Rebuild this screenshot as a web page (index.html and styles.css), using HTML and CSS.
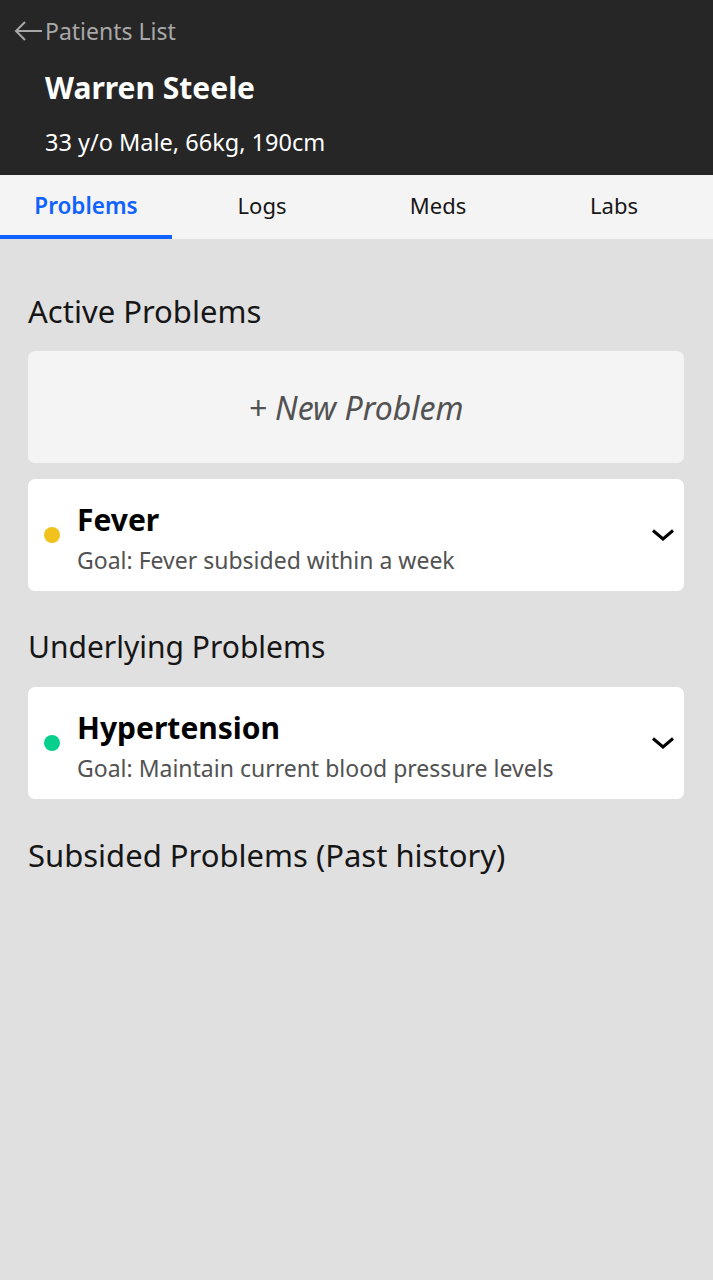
FILE: index.html
```html
<!DOCTYPE html>
<html>
<head>
<meta charset="utf-8">
<link rel="stylesheet" href="styles.css">
</head>
<body>
<header class="header">
  <a class="back">
    <svg class="back-icon" width="30" height="22" viewBox="0 0 30 22"><path d="M12 2 L3 11 L12 20 M3 11 H29" fill="none" stroke="#a8a8a8" stroke-width="2"/></svg>
    <span>Patients List</span>
  </a>
  <h1 class="name">Warren Steele</h1>
  <p class="info">33 y/o Male, 66kg, 190cm</p>
</header>
<nav class="tabs">
  <div class="tab active">Problems</div>
  <div class="tab">Logs</div>
  <div class="tab">Meds</div>
  <div class="tab">Labs</div>
</nav>
<main class="content">
  <h2 class="section">Active Problems</h2>
  <div class="card new">+ New Problem</div>
  <div class="card problem">
    <span class="dot yellow"></span>
    <div class="texts">
      <div class="title">Fever</div>
      <div class="goal">Goal: Fever subsided within a week</div>
    </div>
    <svg class="chev" width="22" height="14" viewBox="0 0 22 14"><path d="M1 2.5 L11 11 L21 2.5" fill="none" stroke="#000" stroke-width="3"/></svg>
  </div>
  <h2 class="section">Underlying Problems</h2>
  <div class="card problem">
    <span class="dot green"></span>
    <div class="texts">
      <div class="title">Hypertension</div>
      <div class="goal">Goal: Maintain current blood pressure levels</div>
    </div>
    <svg class="chev" width="22" height="14" viewBox="0 0 22 14"><path d="M1 2.5 L11 11 L21 2.5" fill="none" stroke="#000" stroke-width="3"/></svg>
  </div>
  <h2 class="section">Subsided Problems (Past history)</h2>
</main>
</body>
</html>
```
FILE: styles.css
```css
* { box-sizing: border-box; }
html, body { margin: 0; padding: 0; }
body {
  font-family: "Noto Sans", "Open Sans", sans-serif;
  background: #e0e0e0;
  min-height: 1280px;
}
.header {
  background: #262626;
  height: 175px;
  padding: 16px 0 0 0;
}
.back {
  display: flex;
  align-items: center;
  color: #a8a8a8;
  font-size: 23px;
  line-height: 30px;
  padding-left: 13px;
}
.back-icon { margin-right: 2px; }
.name {
  margin: 24px 0 0 45px;
  color: #fff;
  font-size: 30px;
  font-weight: 700;
  line-height: 36px;
}
.info {
  margin: 21px 0 0 45px;
  color: #fff;
  font-size: 23.5px;
  line-height: 30px;
}
.tabs {
  display: flex;
  gap: 4px;
  background: #f4f4f4;
  height: 64px;
}
.tab {
  width: 172px;
  display: flex;
  align-items: center;
  justify-content: center;
  font-size: 22px;
  color: #161616;
  border-bottom: 4px solid transparent;
  padding-top: 0;
}
.tab.active {
  color: #0f62fe;
  font-weight: 600;
  font-size: 22.5px;
  border-bottom-color: #0f62fe;
}
.content {
  padding: 52px 29px 0 28px;
}
.section {
  margin: 0 0 20px 0;
  font-size: 31px;
  font-weight: 400;
  line-height: 40px;
  color: #161616;
}
.section:nth-of-type(2) { font-size: 30px; }
.card {
  border-radius: 7px;
  height: 112px;
  margin-bottom: 16px;
}
.new {
  background: #f4f4f4;
  display: flex;
  align-items: center;
  justify-content: center;
  font-size: 32px;
  font-style: italic;
  color: #525252;
}
.problem {
  background: #fff;
  display: flex;
  align-items: center;
  padding: 0 10px 0 16px;
  margin-bottom: 36px;
}
.dot {
  width: 16px;
  height: 16px;
  border-radius: 50%;
  flex: none;
}
.yellow { background: #f1c21b; }
.green { background: #08cf8b; }
.texts {
  flex: 1;
  margin-left: 17px;
  margin-top: 7px;
}
.title {
  font-size: 30px;
  font-weight: 700;
  line-height: 36px;
  color: #000;
}
.goal {
  font-size: 23px;
  line-height: 30px;
  color: #525252;
  margin-top: 7px;
}
.chev { flex: none; }
```
